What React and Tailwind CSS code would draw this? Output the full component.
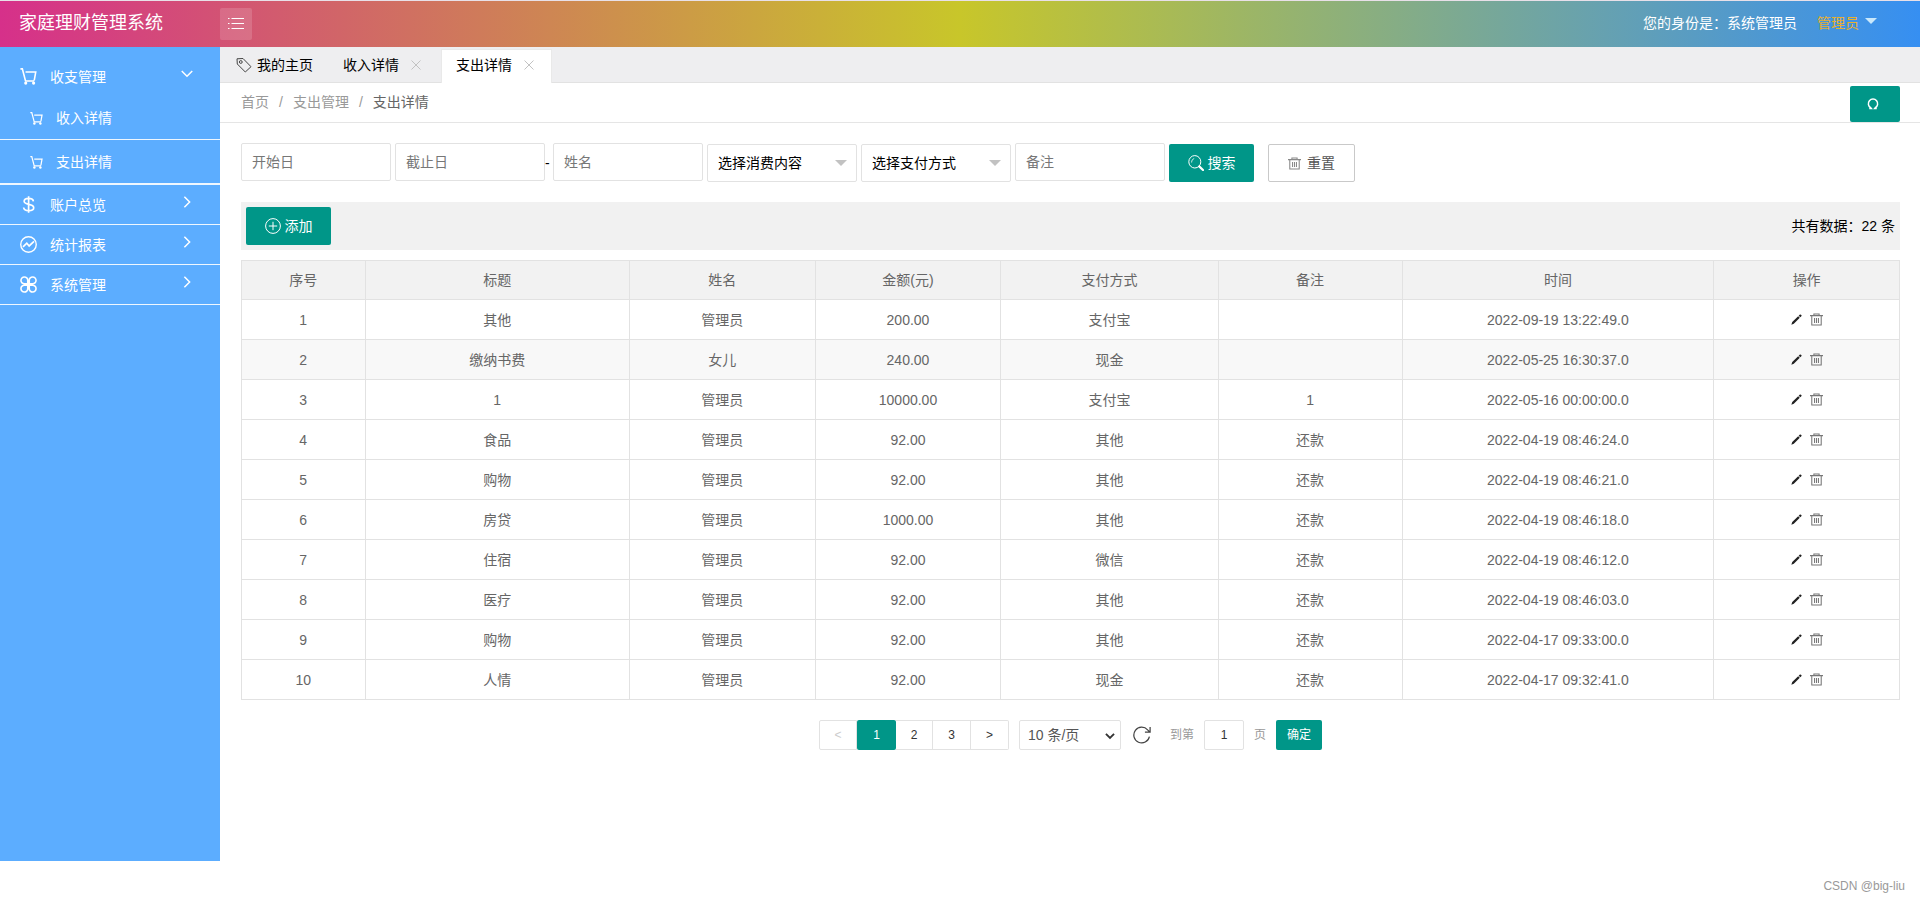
import React from 'react';

const SUB_MENU = ['收入详情', '支出详情'];

const COLUMNS = [
  { title: '序号', width: 'w-[7.45%]' },
  { title: '标题', width: 'w-[15.95%]' },
  { title: '姓名', width: 'w-[11.2%]' },
  { title: '金额(元)', width: 'w-[11.2%]' },
  { title: '支付方式', width: 'w-[13.1%]' },
  { title: '备注', width: 'w-[11.1%]' },
  { title: '时间', width: 'w-[18.8%]' },
  { title: '操作', width: 'w-[11.2%]' },
];

const RECORDS = [
  ['其他', '管理员', '200.00', '支付宝', '', '2022-09-19 13:22:49.0'],
  ['缴纳书费', '女儿', '240.00', '现金', '', '2022-05-25 16:30:37.0'],
  ['1', '管理员', '10000.00', '支付宝', '1', '2022-05-16 00:00:00.0'],
  ['食品', '管理员', '92.00', '其他', '还款', '2022-04-19 08:46:24.0'],
  ['购物', '管理员', '92.00', '其他', '还款', '2022-04-19 08:46:21.0'],
  ['房贷', '管理员', '1000.00', '其他', '还款', '2022-04-19 08:46:18.0'],
  ['住宿', '管理员', '92.00', '微信', '还款', '2022-04-19 08:46:12.0'],
  ['医疗', '管理员', '92.00', '其他', '还款', '2022-04-19 08:46:03.0'],
  ['购物', '管理员', '92.00', '其他', '还款', '2022-04-17 09:33:00.0'],
  ['人情', '管理员', '92.00', '现金', '还款', '2022-04-17 09:32:41.0'],
];

const Icon = ({ className, strokeWidth = 1.2, children }) => (
  <svg
    viewBox="0 0 16 16"
    className={`shrink-0 ${className}`}
    fill="none"
    stroke="currentColor"
    strokeWidth={strokeWidth}
    aria-hidden="true"
  >
    {children}
  </svg>
);

const CartIcon = ({ className }) => (
  <Icon className={className} strokeWidth={1.5}>
    <path d="M.4.8h1.8l3 11.400h8.200M5.200 3.800h9.600l-1.400 7.800" />
    <circle cx="5.400" cy="14.200" r="1.500" fill="currentColor" stroke="none" />
    <circle cx="12.800" cy="14.200" r="1.500" fill="currentColor" stroke="none" />
  </Icon>
);

const DollarIcon = ({ className }) => (
  <Icon className={className} strokeWidth={1.6}>
    <path d="M12.6 5c-.2-1.800-1.900-2.800-4.400-2.800S3.900 3.300 3.900 5c0 4 9 1.800 9 6 0 1.800-2 2.800-4.600 2.800S3.600 12.700 3.400 10.800M8.100.2v15.600" />
  </Icon>
);

const ChartIcon = ({ className }) => (
  <Icon className={className} strokeWidth={1.3}>
    <circle cx="8" cy="8" r="7.300" />
    <path d="M2.800 10.300 6.400 6.800l2.200 2.600L13.200 5" strokeWidth={1.6} />
  </Icon>
);

const CloverIcon = ({ className }) => (
  <Icon className={className} strokeWidth={1.5}>
    <path d="M7.300 7.300H4.200a3.200 3.200 0 1 1 3.100-3.200zM8.700 7.300V4.100a3.200 3.200 0 1 1 3.100 3.200zM7.300 8.700v3.200a3.200 3.200 0 1 1-3.100-3.200zM8.700 8.700h3.100a3.200 3.200 0 1 1-3.100 3.200z" />
  </Icon>
);

const TagIcon = ({ className }) => (
  <Icon className={className} strokeWidth={1}>
    <path d="M1 1.800 1.300 7l8 8 5.700-5.300L7 1.500z" strokeLinejoin="round" />
    <circle cx="4.800" cy="5" r="1.400" />
  </Icon>
);

const ListIcon = ({ className }) => (
  <Icon className={className} strokeWidth={1}>
    <path d="M3.500 2.500H16M3.500 7.500H16M3.500 12.500H16M0 2.500h1.500M0 7.500h1.500M0 12.500h1.500" />
  </Icon>
);

const SearchIcon = ({ className }) => (
  <Icon className={className} strokeWidth={1}>
    <ellipse cx="6.800" cy="6.800" rx="6" ry="6.200" />
    <path d="M3.600 7.500c0-2 1-3.500 2.600-4" strokeWidth={0.8} />
    <path d="m11.200 11.400 3.800 3.600" strokeWidth={2.2} strokeLinecap="round" />
  </Icon>
);

const TrashIcon = ({ className }) => (
  <Icon className={className} strokeWidth={1.3}>
    <path d="M0 3.200h16M4.800 2.900V1.300h6.400v1.600M2.200 3.500v11.300h11.600V3.500M5.600 6v6.200M8 6v6.200M10.400 6v6.200" />
  </Icon>
);

const PencilIcon = ({ className }) => (
  <svg viewBox="0 0 16 16" className={`shrink-0 ${className}`} fill="currentColor" aria-hidden="true">
    <path d="M.5 15.600 1.800 11.800l8.600-8.500 2.400 2.200-8.700 8.500zM11.200 2.500 13 .8c1-.8 3 .9 2.300 2.200l-1.700 1.700z" />
  </svg>
);

const PlusIcon = ({ className }) => (
  <Icon className={className} strokeWidth={1}>
    <circle cx="8" cy="8" r="7.400" />
    <path d="M8 3.800v8.400M3.800 8h8.400" />
  </Icon>
);

const RefreshIcon = ({ className }) => (
  <Icon className={className} strokeWidth={1.1}>
    <path d="M14.600 9.500A7 7 0 1 1 13 3.400l1.800 1.800M15.200.8v4.600h-4.600" />
  </Icon>
);

const Chevron = ({ open }) => (
  <Icon className="mb-1.5 size-3" strokeWidth={2}>
    <path d={open ? 'm1 4 7 7 7-7' : 'm4.500 1 7 7-7 7'} />
  </Icon>
);

const MenuItem = ({ icon, title, open }) => (
  <a href="#" className="flex h-[39px] items-center pr-[27px] pl-5">
    {icon}
    <span className="ml-[13px] flex-1">{title}</span>
    <Chevron open={open} />
  </a>
);

const Sidebar = () => (
  <aside className="w-[220px] shrink-0 bg-[#5cadff] pt-2.5 text-white">
    <nav>
      <div className="border-b border-white/90">
        <MenuItem icon={<CartIcon className="size-[17px]" />} title="收支管理" open />
        {SUB_MENU.map((title) => (
          <a key={title} href="#" className="flex h-11 items-center border-b border-white/90 pl-[30px]">
            <CartIcon className="mt-0.5 size-[13px]" />
            <span className="ml-[13px]">{title}</span>
          </a>
        ))}
      </div>
      <div className="border-b border-white/90">
        <MenuItem icon={<DollarIcon className="size-[17px]" />} title="账户总览" />
      </div>
      <div className="border-b border-white/90">
        <MenuItem icon={<ChartIcon className="size-[17px]" />} title="统计报表" />
      </div>
      <div className="border-b border-white/90">
        <MenuItem icon={<CloverIcon className="size-[17px]" />} title="系统管理" />
      </div>
    </nav>
  </aside>
);

const Header = () => (
  <header className="flex h-[47px] items-center border-t border-[#e8e0e8] bg-linear-[90deg,#d6308a,#c8c62a_50%,#368ff2] text-white">
    <h1 className="w-[220px] pb-0.5 pl-[19px] text-lg">家庭理财管理系统</h1>
    <button aria-label="菜单" className="flex h-8 w-8 items-center justify-center rounded-xs bg-white/15">
      <ListIcon className="size-4" />
    </button>
    <div className="ml-auto flex items-center pb-0.5">
      <span>您的身份是：系统管理员</span>
      <button className="mr-[43px] ml-5 flex items-center gap-1.5 text-[#e9b02e]">
        管理员
        <span className="mb-1 border-x-[6px] border-t-[6px] border-x-transparent border-t-[#c9e8fb]" />
      </button>
    </div>
  </header>
);

const CloseMark = () => (
  <svg viewBox="0 0 10 10" className="size-2.5" stroke="#c2c2c2" aria-hidden="true">
    <path d="m.5.5 9 9m0-9-9 9" />
  </svg>
);

const Tabs = () => (
  <div className="flex h-9 border-b border-[#e2e2e2] bg-[#eeeef0] text-black">
    <button className="flex items-center gap-[5px] px-4">
      <TagIcon className="size-4 text-[#444]" />
      我的主页
    </button>
    <button className="flex items-center gap-3 pr-5 pl-3.5">
      收入详情
      <CloseMark />
    </button>
    <button className="mt-0.5 -mb-px flex items-center gap-3 border-x border-t border-[#e9e9e9] bg-white pr-[17px] pb-1 pl-3.5">
      支出详情
      <CloseMark />
    </button>
  </div>
);

const Breadcrumb = () => (
  <div className="flex h-10 items-center border-b border-[#e5e5e5] pr-5 pl-[21px] text-[#999]">
    <div className="flex pb-0.5">
      <a href="#">首页</a>
      <span className="mx-2.5">/</span>
      <a href="#">支出管理</a>
      <span className="mx-2.5">/</span>
      <span className="text-[#666]">支出详情</span>
    </div>
    <button aria-label="刷新" className="mt-[3px] ml-auto flex h-9 w-[50px] items-center justify-center rounded-xs bg-[#009688] pr-1 text-white">
      <Icon className="size-3" strokeWidth={2}>
        <path d="M3 14h2.800l-.8-1a6.200 6.200 0 1 1 6 0l-.8 1H13" />
      </Icon>
    </button>
  </div>
);

const TextField = ({ label }) => (
  <input
    type="text"
    aria-label={label}
    placeholder={label}
    className="mb-px h-[38px] w-[150px] rounded-xs border border-[#e2e2e2] px-2.5 placeholder:text-[#777]"
  />
);

const SelectField = ({ label }) => (
  <div className="relative mt-px">
    <select aria-label={label} className="h-[38px] w-[150px] appearance-none rounded-xs border border-[#e2e2e2] bg-white px-2.5 text-black">
      <option>{label}</option>
    </select>
    <span className="pointer-events-none absolute top-4 right-2.5 border-x-[6px] border-t-[6px] border-x-transparent border-t-[#c2c2c2]" />
  </div>
);

const SearchForm = () => (
  <form className="flex items-center gap-1 pt-5 text-black">
    <TextField label="开始日" />
    <div className="flex items-center">
      <TextField label="截止日" />
      <span className="w-1">-</span>
    </div>
    <TextField label="姓名" />
    <SelectField label="选择消费内容" />
    <SelectField label="选择支付方式" />
    <TextField label="备注" />
    <button type="button" className="mt-px flex h-[38px] w-[85px] items-center justify-center gap-1 rounded-xs bg-[#009688] text-white">
      <SearchIcon className="size-4" />
      搜索
    </button>
    <button type="reset" className="mt-px ml-2.5 flex h-[38px] w-[87px] items-center justify-center gap-1.5 rounded-xs border border-[#c9c9c9] text-[#555]">
      <TrashIcon className="size-[13px] text-[#888]" />
      重置
    </button>
  </form>
);

const RecordTable = () => (
  <table className="mt-2.5 w-full table-fixed border-collapse text-center text-[#666]">
    <thead>
      <tr className="h-[39px] bg-[#f2f2f2]">
        {COLUMNS.map((column) => (
          <th key={column.title} className={`border border-[#e2e2e2] font-normal ${column.width}`}>
            {column.title}
          </th>
        ))}
      </tr>
    </thead>
    <tbody>
      {RECORDS.map((record, index) => (
        <tr key={record[5]} className={index === 1 ? 'h-10 bg-[#f8f8f8]' : 'h-10'}>
          <td className="border border-[#e2e2e2]">{index + 1}</td>
          {record.map((value, cell) => (
            <td key={cell} className="border border-[#e2e2e2]">
              {value}
            </td>
          ))}
          <td className="border border-[#e2e2e2]">
            <div className="flex items-center justify-center gap-2">
              <button aria-label="编辑" className="text-[#222]">
                <PencilIcon className="size-[11px]" />
              </button>
              <button aria-label="删除" className="text-[#777]">
                <TrashIcon className="size-[13px]" />
              </button>
            </div>
          </td>
        </tr>
      ))}
    </tbody>
  </table>
);

const Pagination = () => (
  <div className="mt-5 flex items-center justify-center text-xs text-[#333]">
    <button disabled className="h-[30px] w-[38px] rounded-l-xs border border-[#e2e2e2] text-[#ccc]">
      &lt;
    </button>
    <button className="h-[30px] w-[39px] rounded-xs bg-[#009688] text-white">1</button>
    <button className="h-[30px] w-[37px] border-y border-r border-[#e2e2e2]">2</button>
    <button className="h-[30px] w-[38px] border-y border-r border-[#e2e2e2]">3</button>
    <button className="h-[30px] w-[38px] rounded-r-xs border-y border-r border-[#e2e2e2]">&gt;</button>
    <div className="relative ml-2.5">
      <select aria-label="每页条数" className="h-[30px] w-[102px] appearance-none rounded-xs border border-[#e2e2e2] bg-white px-2 text-sm text-[#555]">
        <option>10 条/页</option>
      </select>
      <Icon className="pointer-events-none absolute top-[11px] right-1.5 size-2.5" strokeWidth={3}>
        <path d="m1.500 4.500 6.500 6.500 6.500-6.500" />
      </Icon>
    </div>
    <button aria-label="刷新列表" className="ml-3">
      <RefreshIcon className="size-[18px] text-[#444]" />
    </button>
    <label className="ml-[19px] flex items-center gap-2.5 text-[#999]">
      到第
      <input defaultValue="1" className="h-[30px] w-10 rounded-xs border border-[#e2e2e2] text-center text-[#333]" />
      页
    </label>
    <button className="ml-2.5 h-[30px] w-[46px] rounded-xs bg-[#009688] text-white">确定</button>
  </div>
);

const App = () => (
  <div className="flex min-h-screen flex-col bg-white font-['Liberation_Sans','Noto_Sans_CJK_SC',sans-serif] text-sm">
    <Header />
    <div className="flex flex-1">
      <Sidebar />
      <main className="min-w-0 flex-1">
        <Tabs />
        <Breadcrumb />
        <div className="pr-5 pl-[21px]">
          <SearchForm />
          <div className="mt-5 flex h-12 items-center justify-between bg-[#f1f1f1] px-[5px] text-black">
            <button className="flex h-[38px] w-[85px] items-center justify-center gap-1 rounded-xs bg-[#009688] text-white">
              <PlusIcon className="size-4" />
              添加
            </button>
            <span>共有数据：22 条</span>
          </div>
          <RecordTable />
          <Pagination />
        </div>
      </main>
    </div>
    <footer className="flex h-[41px] items-center justify-end pt-2 pr-[15px] text-xs text-[#999]">CSDN @big-liu</footer>
  </div>
);

export default App;
